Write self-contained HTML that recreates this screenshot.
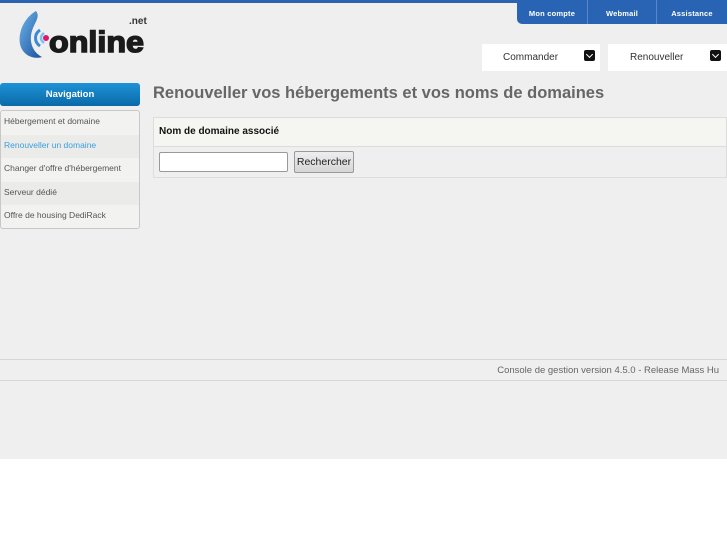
<!DOCTYPE html>
<html><head><meta charset="utf-8"><style>
*{margin:0;padding:0;box-sizing:border-box}
body{width:727px;height:545px;background:#fff;font-family:"Liberation Sans",sans-serif;position:relative;overflow:hidden}
#page{position:absolute;left:0;top:0;width:727px;height:459px;background:#efefef}
.topbar{position:absolute;left:0;top:0;width:727px;height:3px;background:#2b63b0}
.tabs{position:absolute;left:517px;top:0;width:210px;height:24px;background:#2964b4;border-radius:0 0 0 5px;display:flex;font-size:7.5px;font-weight:bold;color:#fff;letter-spacing:0.2px}
.tabs div{height:24px;line-height:27px;text-align:center}
.sep{border-left:1px solid #5b87c4}
.dd{position:absolute;top:44px;height:27px;background:#fff;font-size:10px;color:#333;line-height:27px}
.dd span{position:absolute;top:6px;width:11px;height:11px;background:#111;border-radius:2px}
.dd span:after{content:"";position:absolute;left:3px;top:2px;width:4px;height:4px;border-right:1.6px solid #fff;border-bottom:1.6px solid #fff;transform:rotate(45deg)}
.navbtn{position:absolute;left:0;top:83px;width:140px;height:23px;border-radius:3px;background:linear-gradient(#1d92d6,#0b6aa8);color:#fff;font-size:9.5px;font-weight:bold;text-align:center;line-height:23px}
.menu{position:absolute;left:0;top:110px;width:140px;height:119px;border:1px solid #c8c8c8;border-radius:3px;background:#f2f2f0;overflow:hidden}
.menu div{height:23.5px;line-height:21px;padding-left:3px;font-size:8.5px;color:#555}
.menu div:nth-child(even){background:#ebebe9}
h1{position:absolute;left:153px;top:84px;font-size:16.5px;color:#666;font-weight:bold;white-space:nowrap}
.tbl{position:absolute;left:153px;top:117px;width:574px;height:61px;border:1px solid #ddd;background:#efefef}
.th{height:29px;background:#f5f5f1;border-bottom:1px solid #ddd;font-size:10px;font-weight:bold;color:#111;line-height:28px;padding-left:5px}
.inp{position:absolute;left:5px;top:34px;width:129px;height:20px;background:#fff;border:1px solid #999;border-radius:2px}
.btn{position:absolute;left:140px;top:33px;width:60px;height:22px;background:linear-gradient(#eee,#d6d6d6);border:1px solid #999;border-radius:2px;font-size:10.5px;color:#222;text-align:center;line-height:20px}
.foot{position:absolute;left:0;top:359px;width:727px;height:22px;border-top:1px solid #d6d6d6;border-bottom:1px solid #d6d6d6;font-size:9.5px;color:#666;text-align:right;padding-right:8px;line-height:21px}
</style></head><body>
<div id="page">
<div class="topbar"></div>
<svg style="position:absolute;left:14px;top:8px" width="135" height="52" viewBox="0 0 135 52">
<defs><linearGradient id="g" x1="0" y1="0" x2="1" y2="1"><stop offset="0" stop-color="#6fb6ea"/><stop offset="1" stop-color="#1a4f9c"/></linearGradient></defs>
<path d="M22 3 C10 10 4 24 6 36 C8 46 18 52 28 49 C18 44 14 32 19 20 C22 13 26 8 22 3Z" fill="url(#g)"/>
<path d="M26 22 C20 26 20 34 26 38" stroke="#3c8ad6" stroke-width="3" fill="none"/>
<path d="M30 25 C26 28 26 32 30 35" stroke="#7cc0ee" stroke-width="2.5" fill="none"/>
<circle cx="32" cy="30" r="3" fill="#e0156e"/>
<text x="35" y="44" font-family="Liberation Sans,sans-serif" font-weight="bold" font-size="30" fill="#1a1a1a" stroke="#1a1a1a" stroke-width="1.5" textLength="95" lengthAdjust="spacingAndGlyphs">online</text>
<text x="115" y="16" font-family="Liberation Sans,sans-serif" font-weight="bold" font-size="10" fill="#333">.net</text>
</svg>
<div class="tabs"><div style="width:70px">Mon compte</div><div class="sep" style="width:69px">Webmail</div><div class="sep" style="width:71px">Assistance</div></div>
<div class="dd" style="left:482px;width:118px"><b style="font-weight:normal;position:absolute;left:21px">Commander</b><span style="left:102px"></span></div>
<div class="dd" style="left:608px;width:119px"><b style="font-weight:normal;position:absolute;left:22px">Renouveller</b><span style="left:102px"></span></div>
<div class="navbtn">Navigation</div>
<div class="menu">
<div>Hébergement et domaine</div>
<div style="color:#3aa0dd">Renouveller un domaine</div>
<div>Changer d'offre d'hébergement</div>
<div>Serveur dédié</div>
<div>Offre de housing DediRack</div>
</div>
<h1>Renouveller vos hébergements et vos noms de domaines</h1>
<div class="tbl"><div class="th">Nom de domaine associé</div><div class="inp"></div><div class="btn">Rechercher</div></div>
<div class="foot">Console de gestion version 4.5.0 - Release Mass Hu</div>
</div>
</body></html>
